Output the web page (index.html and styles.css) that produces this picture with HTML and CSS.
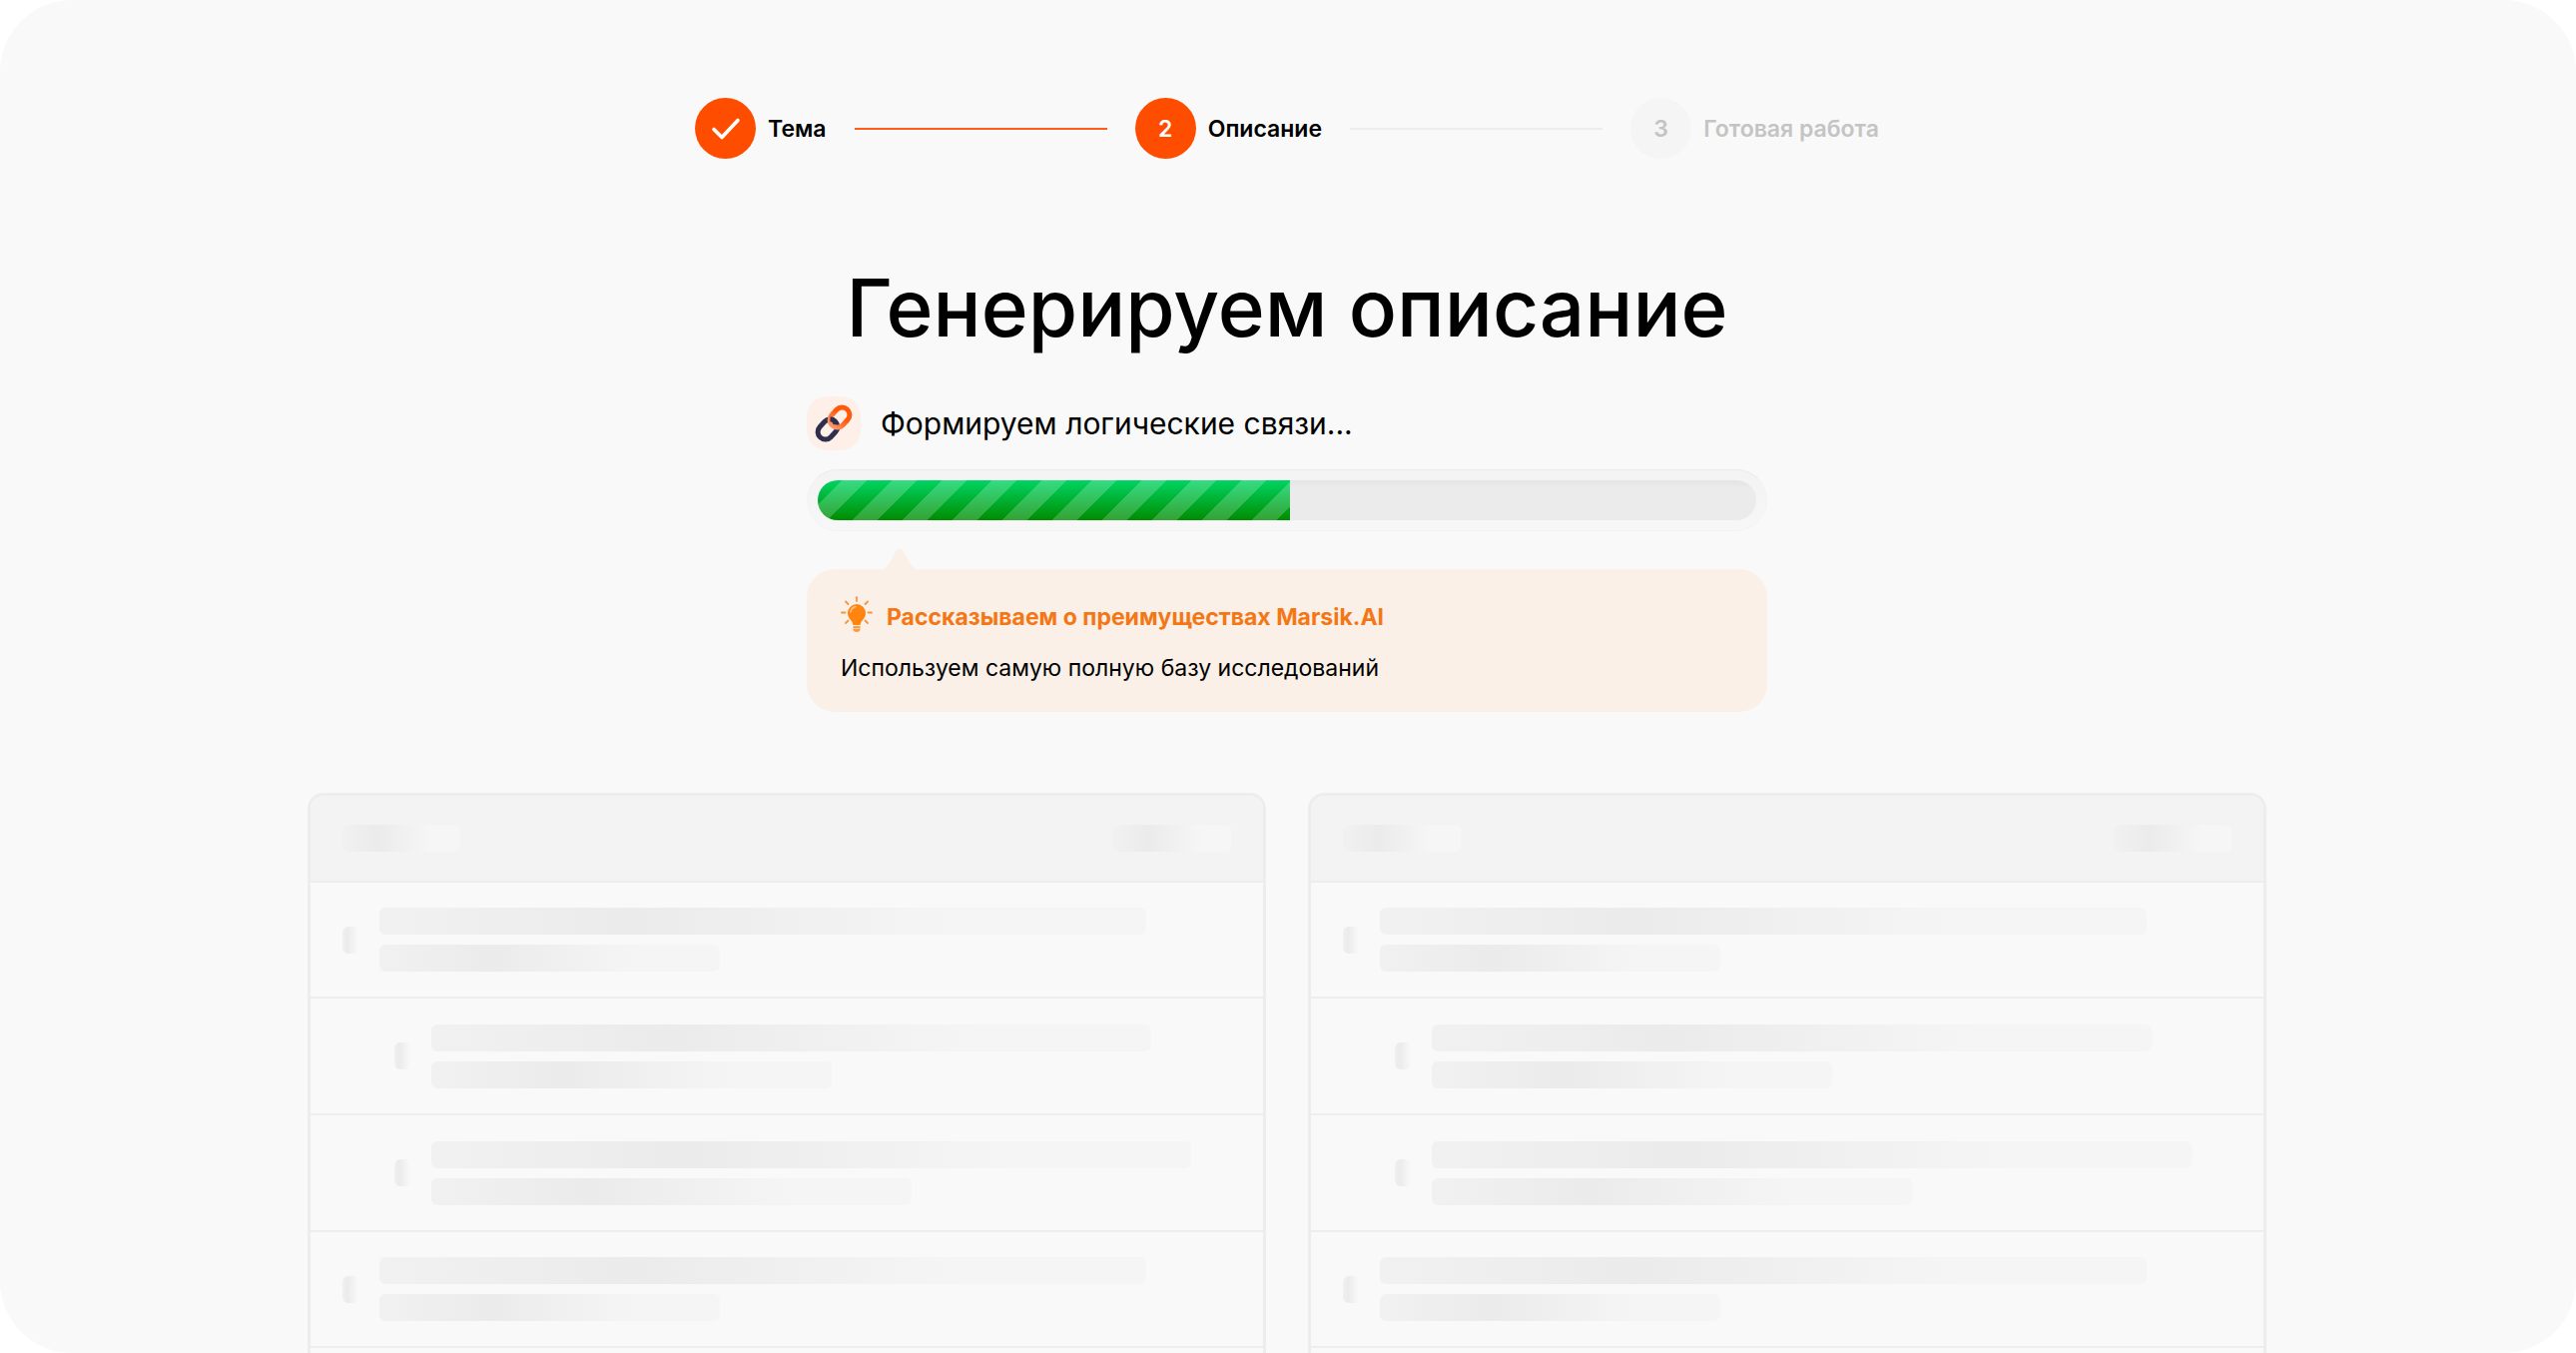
FILE: index.html
```html
<!DOCTYPE html>
<html lang="ru">
<head>
    <meta charset="UTF-8">
    <meta name="viewport" content="width=device-width, initial-scale=1.0">
    <title>Генерируем описание</title>
    <link rel="stylesheet" href="styles.css">
</head>
<body>

    <main class="page">
        <ol class="steps">
            <li class="step">
                <span class="step-badge">
                    <svg class="check" viewBox="0 0 30 24" aria-hidden="true">
                        <path d="M3 12.500l8 8L27 3.500" fill="none" stroke="#fff" stroke-width="3.600" stroke-linecap="round" stroke-linejoin="round"/>
                    </svg>
                </span>
                <span class="step-label">Тема</span>
            </li>
            <li class="step-line done" role="presentation"></li>
            <li class="step" aria-current="step">
                <span class="step-badge">2</span>
                <span class="step-label">Описание</span>
            </li>
            <li class="step-line" role="presentation"></li>
            <li class="step disabled">
                <span class="step-badge">3</span>
                <span class="step-label">Готовая работа</span>
            </li>
        </ol>

        <h1 class="title">Генерируем описание</h1>

        <section class="loader">
            <div class="status">
                <span class="status-icon">
                    <svg class="chain" viewBox="0 0 38 38" aria-hidden="true">
                        <defs>
                            <linearGradient id="link-orange" x1="0" y1="0" x2="1" y2="0">
                                <stop offset="0" stop-color="#ff9266"/>
                                <stop offset="0.600" stop-color="#ff5a0a"/>
                            </linearGradient>
                        </defs>
                        <rect x="-11" y="-7.500" width="22" height="15" rx="7.500" transform="translate(13 25) rotate(-47)" fill="none" stroke="#2f2e4d" stroke-width="5"/>
                        <rect x="-11" y="-7.500" width="22" height="15" rx="7.500" transform="translate(25 13) rotate(-47)" fill="none" stroke="url(#link-orange)" stroke-width="5"/>
                        <path d="M15.500 14.800Q20.600 15.200 21 20" fill="none" stroke="#2f2e4d" stroke-width="5"/>
                    </svg>
                </span>
                <label class="status-text" for="progress">Формируем логические связи...</label>
            </div>

            <div class="progress-frame">
                <progress class="progress" id="progress" value="50.3" max="100"></progress>
            </div>

            <div class="tip">
                <svg class="tip-arrow" viewBox="0 0 32 22" aria-hidden="true">
                    <path d="M0 22C5 19 9 10 12 4Q16 -1 20 4C23 10 27 19 32 22Z" fill="#fbf0e7"/>
                </svg>
                <div class="tip-head">
                    <svg class="bulb" viewBox="0 0 32 42" aria-hidden="true">
                        <g stroke="#fb923c" stroke-width="1.800" stroke-linecap="round">
                            <path d="M16 1v4M5 5.500l2.500 2.500M27 5.500L24.500 8M1 16.500h3.500M31 16.500h-3.500M5 27l2.500-2.500M27 27l-2.500-2.500"/>
                        </g>
                        <path d="M16 8a9 9 0 0 0-9 9c0 3.500 1.800 5.600 3.400 7.500 1.200 1.500 1.800 2.600 2 4.500h7.200c.2-1.900.8-3 2-4.500C23.200 22.600 25 20.500 25 17a9 9 0 0 0-9-9z" fill="#ff8410"/>
                        <path d="M10 16q.500-4.500 5-5.500" fill="none" stroke="#ffc58c" stroke-width="1.500" stroke-linecap="round"/>
                        <path d="M12.500 30h7v4q-.500 2-3.500 2t-3.500-2z" fill="#fb9a45"/>
                        <path d="M12.500 32.500h7" stroke="#ffc995" stroke-width="1"/>
                    </svg>
                    <strong class="tip-title">Рассказываем о преимуществах Marsik.AI</strong>
                </div>
                <p class="tip-text">Используем самую полную базу исследований</p>
            </div>
        </section>

        <div class="cards" aria-hidden="true">
            <div class="card">
                <div class="card-head">
                    <span class="chip"></span>
                    <span class="chip"></span>
                </div>
                <div class="row">
                    <span class="marker"></span>
                    <div class="bars"><span class="bar w90"></span><span class="bar w40"></span></div>
                </div>
                <div class="row nested">
                    <span class="marker"></span>
                    <div class="bars"><span class="bar w90"></span><span class="bar w50"></span></div>
                </div>
                <div class="row nested">
                    <span class="marker"></span>
                    <div class="bars"><span class="bar w95"></span><span class="bar w60"></span></div>
                </div>
                <div class="row">
                    <span class="marker"></span>
                    <div class="bars"><span class="bar w90"></span><span class="bar w40"></span></div>
                </div>
                <div class="row nested">
                    <span class="marker"></span>
                    <div class="bars"><span class="bar w90"></span><span class="bar w50"></span></div>
                </div>
            </div>
            <div class="card">
                <div class="card-head">
                    <span class="chip"></span>
                    <span class="chip"></span>
                </div>
                <div class="row">
                    <span class="marker"></span>
                    <div class="bars"><span class="bar w90"></span><span class="bar w40"></span></div>
                </div>
                <div class="row nested">
                    <span class="marker"></span>
                    <div class="bars"><span class="bar w90"></span><span class="bar w50"></span></div>
                </div>
                <div class="row nested">
                    <span class="marker"></span>
                    <div class="bars"><span class="bar w95"></span><span class="bar w60"></span></div>
                </div>
                <div class="row">
                    <span class="marker"></span>
                    <div class="bars"><span class="bar w90"></span><span class="bar w40"></span></div>
                </div>
                <div class="row nested">
                    <span class="marker"></span>
                    <div class="bars"><span class="bar w90"></span><span class="bar w50"></span></div>
                </div>
            </div>
        </div>
    </main>

</body>
</html>
```

FILE: styles.css
```css
* { box-sizing: border-box; }
body { margin: 0; background: #fff; color: #000; font-family: Inter, "Noto Sans", sans-serif; font-size: 24px; line-height: 36px; }

.page { height: 100vh; overflow: hidden; padding: 98px 41px 0 39px; border-radius: 72px; background: #f9f9f9; }

/* Steps */
.steps { display: flex; align-items: center; gap: 28px; max-width: 1186px; margin: 0 auto; padding: 0; list-style: none; }
.step { display: flex; align-items: center; gap: 12px; font-size: 23px; font-weight: 600; white-space: nowrap; }
.step-badge { display: flex; align-items: center; justify-content: center; width: 61px; height: 61px; border-radius: 50%; background: #ff4d00; color: #fff; }
.check { width: 30px; height: 24px; }
.step-line { flex: 1; height: 2px; background: #ededed; }
.step-line.done { background: #ff5c1a; }
.step.disabled { color: #c4c4c4; }
.disabled .step-badge { background: #f5f5f5; color: #c4c4c4; }

.title { margin: 101px 0 41px; font-size: 80px; line-height: 96px; font-weight: 500; text-align: center; }

/* Progress */
.loader { max-width: 962px; margin: 0 auto 81px; }
.status { display: flex; align-items: center; gap: 20px; margin-bottom: 19px; }
.status-icon { display: flex; align-items: center; justify-content: center; width: 54px; height: 54px; border-radius: 20px; background: #ffefe9; }
.chain { width: 38px; height: 38px; }
.status-text { font-size: 30px; }
.progress-frame { padding: 10px; border: 1px solid #f3f3f3; border-top-color: #ececec; border-radius: 31px; background: linear-gradient(#f3f3f3, #f7f7f7); }
.progress { appearance: none; display: block; width: 100%; height: 40px; overflow: hidden; border: 0; border-radius: 20px; background: #ebebeb; }
.progress::-webkit-progress-bar { background: linear-gradient(#e4e4e4, #ebebeb 8px); }
.progress::-webkit-progress-value {
    background:
        linear-gradient(135deg, transparent 25%, rgba(255, 255, 255, .2) 25% 50%, transparent 50% 75%, rgba(255, 255, 255, .2) 75%) 0 0 / 50px 50px,
        linear-gradient(#00d463, #008c00);
}

/* Tip */
.tip { position: relative; margin-top: 38px; padding: 27px 34px 26px; border-radius: 28px; background: #fbf0e7; }
.tip-arrow { position: absolute; left: 77px; bottom: 100%; width: 32px; height: 22px; }
.tip-head { display: flex; align-items: center; gap: 14px; margin-bottom: 12px; }
.bulb { width: 32px; height: 42px; }
.tip-title { color: #f47716; font-size: 23px; font-weight: 700; }
.tip-text { margin: 0; font-size: 23px; }

/* Skeleton cards */
.cards { display: grid; grid-template-columns: 1fr 1fr; gap: 42px; max-width: 1962px; margin: 0 auto; }
.card { overflow: hidden; border: 3px solid #ededed; border-radius: 16px; }
.card-head { display: flex; align-items: center; justify-content: space-between; height: 87px; padding: 0 32px; border-bottom: 2px solid #ededed; background: #f3f3f3; }
.chip, .bar { height: 27px; border-radius: 6px; background: linear-gradient(90deg, #f1f1f1, #ebebeb 33%, #f5f5f5 75%); }
.chip { width: 118px; background: linear-gradient(90deg, #f1f1f1, #ebebeb 30%, #f6f6f6 75%); }
.row { display: flex; align-items: center; gap: 20px; height: 116px; padding: 0 32px; border-bottom: 2px solid #eee; }
.row.nested { height: 117px; padding-left: 84px; }
.marker { width: 17px; height: 27px; border-radius: 6px; background: linear-gradient(90deg, #f0f0f0, #ebebeb 30%, #f9f9f9 95%); }
.bars { display: flex; flex: 1; flex-direction: column; gap: 10px; }
.w40 { width: 40%; }
.w50 { width: 50%; }
.w60 { width: 60%; }
.w90 { width: 90%; }
.w95 { width: 95%; }
```
